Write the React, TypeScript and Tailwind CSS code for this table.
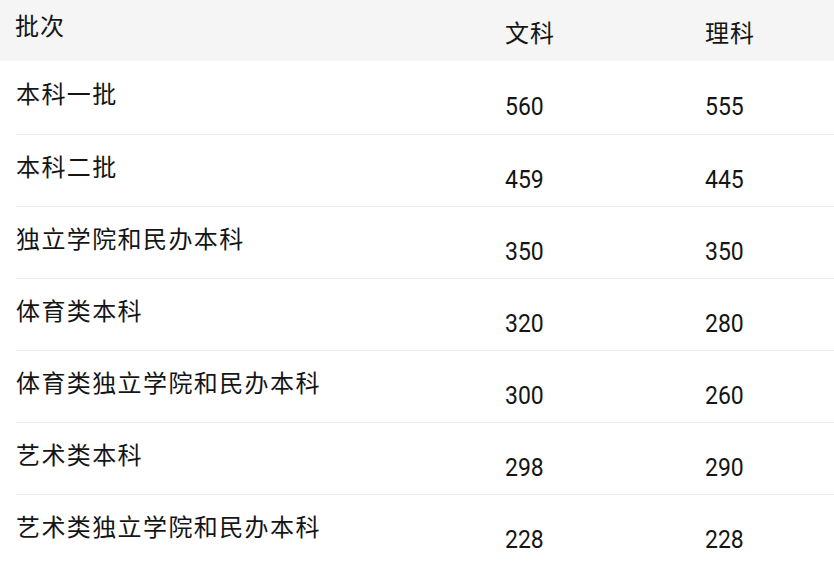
import React from "react";

const rows: [string, string, string][] = [
  ["本科一批", "560", "555"],
  ["本科二批", "459", "445"],
  ["独立学院和民办本科", "350", "350"],
  ["体育类本科", "320", "280"],
  ["体育类独立学院和民办本科", "300", "260"],
  ["艺术类本科", "298", "290"],
  ["艺术类独立学院和民办本科", "228", "228"],
];

const num = { fontFamily: 'Roboto, "Noto Sans", sans-serif' };

export default function App() {
  return (
    <div
      className="w-[834px] h-[564px] overflow-hidden bg-white text-[#151515]"
      style={{ fontFamily: '"Noto Sans CJK SC", "Noto Sans", sans-serif' }}
    >
      <div className="h-[61px] bg-[#f5f5f5] flex">
        <div className="w-[505px] pl-[15px] pt-[12px] text-[24px] leading-[26px] tracking-[1px]">批次</div>
        <div className="w-[200px] pt-[19px] text-[24px] leading-[26px] tracking-[1px]">文科</div>
        <div className="flex-1 pt-[19px] text-[24px] leading-[26px] tracking-[1px]">理科</div>
      </div>
      <div>
        {rows.map((r, i) => (
          <div key={i} className={`flex ${i === 0 ? "h-[74px]" : "h-[72px]"} ${i < rows.length - 1 ? "border-b border-[#ebebeb] ml-[16px]" : "ml-[16px]"}`}>
            <div className={`w-[489px] ${i === 0 ? "pt-[19px]" : "pt-[18px]"} text-[24px] leading-[26px] tracking-[1.4px]`}>{r[0]}</div>
            <div style={num} className={`w-[200px] ${i === 0 ? "pt-[29px]" : "pt-[28px]"} text-[23px] leading-[26px] scale-y-110 origin-top`}>{r[1]}</div>
            <div style={num} className={`flex-1 ${i === 0 ? "pt-[29px]" : "pt-[28px]"} text-[23px] leading-[26px] scale-y-110 origin-top`}>{r[2]}</div>
          </div>
        ))}
      </div>
    </div>
  );
}
